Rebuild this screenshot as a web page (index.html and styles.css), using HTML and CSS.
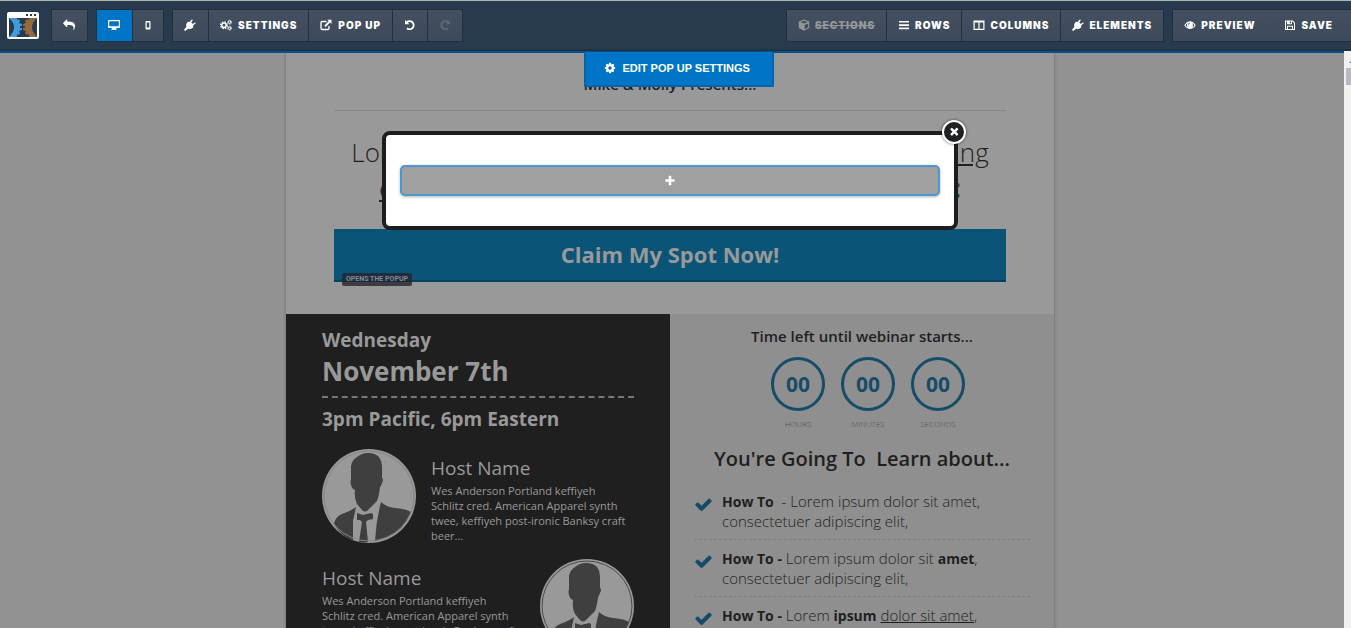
FILE: index.html
```html
<!DOCTYPE html>
<html lang="en">
<head>
  <meta charset="UTF-8">
  <meta name="viewport" content="width=device-width, initial-scale=1.0">
  <title>Page Editor</title>
  <link rel="stylesheet" href="styles.css">
</head>
<body>

  <!-- icon sprite -->
  <svg class="sprite" aria-hidden="true">
    <symbol id="reply" viewBox="0 0 1792 1792"><path d="M1792 640q0 26-19 45l-512 512q-19 19-45 19t-45-19-19-45v-256h-224q-98 0-175.500 6t-154 21.500-133 42.500-105.500 69.500-80 101-48.500 138.500-17.500 181q0 55 5 123 0 6 2.500 23.500t2.500 26.500q0 15-8.500 25t-23.500 10q-16 0-28-17-7-9-13-22t-13.500-30-10.500-24q-127-285-127-451 0-199 53-333 162-403 875-403h224v-256q0-26 19-45t45-19 45 19l512 512q19 19 19 45z" transform="matrix(-1 0 0 1 1792 0)"/></symbol>
    <symbol id="desktop" viewBox="0 0 12 12"><path fill-rule="evenodd" d="M1 1h10q1 0 1 1v6q0 1-1 1H8l.5 1.500v.5h-5v-.5L4 9H1Q0 9 0 8V2q0-1 1-1zm.2 1.200v5h9.600v-5z"/></symbol>
    <symbol id="mobile" viewBox="0 0 12 12"><path fill-rule="evenodd" d="M4.500 2h3q1 0 1 1v6.500q0 1-1 1h-3q-1 0-1-1V3q0-1 1-1zm.2 1.500v5h2.600v-5z"/></symbol>
    <symbol id="plug" viewBox="0 0 12 12"><path d="M7.500.7 5.800 2.800 3.600 3 2.200 5.200 2.300 8 .3 10.200v1.500l1.800-.2L4 9.800l2.800.1 2.300-1.500.2-2.200 2.200-1.700q.6-1.200-.7-1L8.900 4.900 7.200 3.200 8.700 1.400Q8.700.2 7.500.7z"/></symbol>
    <symbol id="cog" viewBox="0 0 1792 1792"><path d="M1152 896q0-106-75-181t-181-75-181 75-75 181 75 181 181 75 181-75 75-181zm512-109v222q0 12-8 23t-20 13l-185 28q-19 54-39 91 35 50 107 138 10 12 10 25t-9 23q-27 37-99 108t-94 71q-12 0-26-9l-138-108q-44 23-91 38-16 136-29 186-7 28-36 28h-222q-14 0-24.500-8.500t-11.500-21.500l-28-184q-49-16-90-37l-141 107q-10 9-25 9-14 0-25-11-126-114-165-168-7-10-7-23 0-12 8-23 15-21 51-66.500t54-70.500q-27-50-41-99l-183-27q-13-2-21-12.500t-8-23.500v-222q0-12 8-23t19-13l186-28q14-46 39-92-40-57-107-138-10-12-10-24 0-10 9-23 26-36 98.500-107.500t94.500-71.500q13 0 26 10l138 107q44-23 91-38 16-136 29-186 7-28 36-28h222q14 0 24.500 8.500t11.500 21.500l28 184q49 16 90 37l142-107q9-9 24-9 13 0 25 10 129 119 165 170 7 8 7 22 0 12-8 23-15 21-51 66.500t-54 70.500q26 50 41 98l183 28q13 2 21 12.500t8 23.500z"/></symbol>
    <symbol id="cogs" viewBox="0 0 12 12">
      <g fill="none" stroke="currentColor">
        <circle cx="4" cy="6.300" r="2.200" stroke-width="1.500"/>
        <circle cx="4" cy="6.300" r="3.400" stroke-width="1.200" stroke-dasharray="1.500 1.170"/>
        <circle cx="9.700" cy="3.200" r="1.200" stroke-width="1"/>
        <circle cx="9.700" cy="3.200" r="2" stroke-width=".8" stroke-dasharray="1.200 .9"/>
        <circle cx="9.700" cy="9.200" r="1.200" stroke-width="1"/>
        <circle cx="9.700" cy="9.200" r="2" stroke-width=".8" stroke-dasharray="1.200 .9"/>
      </g>
    </symbol>
    <symbol id="external" viewBox="0 0 12 12"><path d="M6.500 2.500H2.300Q1 2.500 1 3.800v5.400q0 1.300 1.300 1.300h5.400Q9 10.500 9 9.200V7" fill="none" stroke="currentColor" stroke-width="1.300"/><path d="M7.300.8h4.200V5L10 3.600 5.700 8 4.300 6.600l4.400-4.300z"/></symbol>
    <symbol id="undo" viewBox="0 0 12 12"><path d="M2.800 3.300A4 4 0 1 1 3 9.200" fill="none" stroke="currentColor" stroke-width="1.900"/><path d="M1 1v4.300h4.300z"/></symbol>
    <symbol id="cube" viewBox="0 0 12 12"><path fill-rule="evenodd" d="M6 .6 11.200 2.500v6.600L6 11.800.8 9.100V2.500zM6.500 6v4.300l3.700-2V4.500zM6 1.700 2.300 3 6 4.500 9.700 3z"/></symbol>
    <symbol id="bars" viewBox="0 0 12 12"><path d="M1 2h10v1.600H1zM1 5.300h10v1.600H1zM1 8.600h10v1.600H1z"/></symbol>
    <symbol id="columns" viewBox="0 0 12 12"><path fill-rule="evenodd" d="M.5 1.500h11v9.500H.5zM1.700 3.500V9.800h3.700V3.500zM6.600 3.500V9.800h3.700V3.500z"/></symbol>
    <symbol id="eye" viewBox="0 0 12 12"><path fill-rule="evenodd" d="M.3 6.200Q2.800 2.300 6 2.300t5.700 3.900Q9.200 10 6 10T.3 6.200zm1.300 0q.8 1.300 1.900 2Q2.400 6 3.700 4.100q-1.200.7-2.100 2.100zm8.800 0Q9.500 4.800 8.300 4.100 9.600 6 8.500 8.200q1.100-.7 1.900-2zM6 3.600Q4.300 3.800 4.200 5.700h.7Q5 4.400 6 4.300z"/></symbol>
    <symbol id="save" viewBox="0 0 12 12"><path fill-rule="evenodd" d="M1 1.500h7.800L11 3.700V11H1zM2 2.500V10h1V6.800h6V10h1V4.200L8.400 2.500H8v2.700H3V2.500zM5.700 2.500v1.700H7V2.500zM4 7.800V10h4V7.800z"/></symbol>
    <symbol id="plus" viewBox="0 0 1792 1792"><path d="M1600 736v192q0 40-28 68t-68 28h-416v416q0 40-28 68t-68 28h-192q-40 0-68-28t-28-68v-416h-416q-40 0-68-28t-28-68v-192q0-40 28-68t68-28h416v-416q0-40 28-68t68-28h192q40 0 68 28t28 68v416h416q40 0 68 28t28 68z"/></symbol>
    <symbol id="check" viewBox="0 0 1792 1792"><path d="M1671 566q0 40-28 68l-724 724-136 136q-28 28-68 28t-68-28l-136-136-362-362q-28-28-28-68t28-68l136-136q28-28 68-28t68 28l294 295 656-657q28-28 68-28t68 28l136 136q28 28 28 68z"/></symbol>
    <symbol id="person" viewBox="0 0 94 94">
      <circle cx="47" cy="47" r="47" fill="#999"/>
      <path fill="#3f3f3f" d="M29 17q1-6 6-9 5-4 11-4 7 0 11 4 3 4 3 9v12q2 1 0 5-1 3-2 4-1 9-3 14l-9 9q-3 3-6 0l-5-6q-3-6-2-14-3-1-4-5-1-4 0-5z"/>
      <path fill="#3f3f3f" d="M34 58 31 72v20Q18 86 12 75q1-7 8-10 9-3 14-7zM59 53q5 5 14 6 12 1 16 4-8 23-36 29 1-20 6-39zM35 64l6 2 8-2 2 1v5l-5 1-2 2 2 20q-5 1-9 0l3-20-2-2-3 0z"/>
    </symbol>
  </svg>

  <header class="toolbar">
    <svg class="logo" viewBox="0 0 32 27" role="img" aria-label="Editor logo">
      <rect width="32" height="27" rx="2" fill="#fff"/>
      <path fill="#283a4e" d="M2 6h28v19H2zM19 2h2v2h-2zM23 2h2v2h-2zM27 2h2v2h-2z"/>
      <path fill="#3f9bdc" d="M2 6h8v2l2-1 1 2-1 2 3 1v2h-2v2h2v2l-3 1 1 2-1 2-2-1v3H2q10-10 0-19z"/>
      <path fill="#946a3c" d="M30 6h-8v2l-2-1-2 2 1 2-3 1v2h2v2h-2v2l3 1-1 2 2 2 2-1v3h8q-10-10 0-19z"/>
    </svg>

    <div class="btn-group">
      <button class="btn btn--icon" aria-label="Back"><svg class="icon"><use href="#reply"/></svg></button>
    </div>
    <div class="btn-group">
      <button class="btn btn--icon btn--active" aria-label="Desktop"><svg class="icon"><use href="#desktop"/></svg></button>
      <button class="btn btn--narrow" aria-label="Mobile"><svg class="icon"><use href="#mobile"/></svg></button>
    </div>
    <div class="btn-group">
      <button class="btn btn--icon" aria-label="Integrations"><svg class="icon"><use href="#plug"/></svg></button>
      <button class="btn"><svg class="icon"><use href="#cogs"/></svg>SETTINGS</button>
      <button class="btn"><svg class="icon"><use href="#external"/></svg>POP UP</button>
      <button class="btn" aria-label="Undo"><svg class="icon"><use href="#undo"/></svg></button>
      <button class="btn" aria-label="Redo" disabled><svg class="icon icon--flip"><use href="#undo"/></svg></button>
    </div>

    <div class="btn-group btn-group--right">
      <button class="btn btn--off" disabled><svg class="icon"><use href="#cube"/></svg><s>SECTIONS</s></button>
      <button class="btn"><svg class="icon"><use href="#bars"/></svg>ROWS</button>
      <button class="btn"><svg class="icon"><use href="#columns"/></svg>COLUMNS</button>
      <button class="btn"><svg class="icon"><use href="#plug"/></svg>ELEMENTS</button>
    </div>
    <div class="btn-group btn-group--last">
      <button class="btn"><svg class="icon"><use href="#eye"/></svg>PREVIEW</button>
      <button class="btn"><svg class="icon"><use href="#save"/></svg>SAVE</button>
    </div>
  </header>

  <div class="workspace">
    <main class="canvas">
      <div class="sheet">
        <section class="hero">
          <p class="hero__presents">Mike &amp; Molly Presents...</p>
          <h1 class="hero__title">Lorem Ipsum Dolor Amet <u>Set Diam Nonumy Adipiscing</u><br><u>euismod tincidunt laoreet dolore</u> magni <b>aliquam:</b></h1>
          <button class="hero__cta">Claim My Spot Now!</button>
          <span class="hero__tag">OPENS THE POPUP</span>
        </section>

        <div class="columns">
          <section class="event">
            <p class="event__day">Wednesday</p>
            <h2 class="event__date">November 7th</h2>
            <p class="event__time">3pm Pacific, 6pm Eastern</p>

            <div class="host">
              <svg class="host__photo" viewBox="0 0 94 94"><use href="#person"/><circle class="host__ring" cx="47" cy="47" r="45"/></svg>
              <div class="host__bio">
                <h3 class="host__name">Host Name</h3>
                <p>Wes Anderson Portland keffiyeh Schlitz cred. American Apparel synth twee, keffiyeh post-ironic Banksy craft beer...</p>
              </div>
            </div>
            <div class="host host--reverse">
              <svg class="host__photo" viewBox="0 0 94 94"><use href="#person"/><circle class="host__ring host__ring--dark" cx="47" cy="47" r="45"/></svg>
              <div class="host__bio">
                <h3 class="host__name">Host Name</h3>
                <p>Wes Anderson Portland keffiyeh Schlitz cred. American Apparel synth twee, keffiyeh post-ironic Banksy craft beer...</p>
              </div>
            </div>
          </section>

          <section class="learn">
            <p class="learn__label">Time left until webinar starts...</p>
            <div class="countdown">
              <div class="countdown__item"><span class="countdown__value">00</span>HOURS</div>
              <div class="countdown__item"><span class="countdown__value">00</span>MINUTES</div>
              <div class="countdown__item"><span class="countdown__value">00</span>SECONDS</div>
            </div>
            <h2 class="learn__title">You're Going To &nbsp;Learn about...</h2>
            <ul class="checklist">
              <li><svg class="checklist__icon"><use href="#check"/></svg><span><b>How To</b> &nbsp;- Lorem ipsum dolor sit amet, consectetuer adipiscing elit,</span></li>
              <li><svg class="checklist__icon"><use href="#check"/></svg><span><b>How To -</b> Lorem ipsum dolor sit <b>amet</b>, consectetuer adipiscing elit,</span></li>
              <li><svg class="checklist__icon"><use href="#check"/></svg><span><b>How To -</b> Lorem <b>ipsum</b> <u>dolor sit amet</u>, consectetuer adipiscing elit,</span></li>
            </ul>
          </section>
        </div>
      </div>

      <div class="popup" role="dialog" aria-label="Pop up">
        <button class="popup__add" aria-label="Add row"><svg class="icon"><use href="#plus"/></svg></button>
        <button class="popup__close" aria-label="Close"><svg class="icon icon--x"><use href="#plus"/></svg></button>
      </div>
    </main>
    <div class="scrollbar">
      <svg class="scrollbar__arrow" viewBox="0 0 8 4"><path d="M0 4 4 0l4 4z"/></svg>
      <div class="scrollbar__thumb"></div>
    </div>

    <button class="edit-popup"><svg class="icon"><use href="#cog"/></svg>EDIT POP UP SETTINGS</button>
  </div>

</body>
</html>
```

FILE: styles.css
```css
:root {
  --clr-bar: #283a4e;
  --clr-line: #25303c;
  --clr-blue: #0074c7;
  --clr-ink: #1f1f1f;
  --clr-teal: #174c69;
  --clr-paper: #999;

  font-family: "Open Sans", sans-serif;
}

* {
  box-sizing: border-box;
}

body {
  height: 100vh;
  margin: 0;
  display: flex;
  flex-direction: column;
  overflow: hidden;
}

h1, h2, h3, p, ul {
  margin: 0;
  padding: 0;
}

b {
  font-weight: 700;
}

button {
  font: inherit;
  color: inherit;
  cursor: pointer;
}

.sprite {
  display: none;
}

.icon {
  width: 12px;
  height: 12px;
  flex: none;
  fill: currentColor;
}

.icon--flip {
  transform: scaleX(-1);
}

.icon--x {
  transform: rotate(45deg);
}

/* toolbar */

.toolbar {
  flex: none;
  height: 51px;
  display: flex;
  align-items: center;
  gap: 8px;
  padding-left: 7px;
  overflow: hidden;
  background: var(--clr-bar);
  border-top: 1px solid #b0b4b4;
  border-bottom: 2px solid #22303f;
}

.logo {
  width: 32px;
  height: 27px;
  margin-right: 4px;
  flex: none;
}

.btn-group {
  display: flex;
  flex: none;
  border: 1px solid var(--clr-line);
}

.btn-group--right {
  margin-left: auto;
}

.btn {
  height: 31px;
  display: flex;
  align-items: center;
  gap: 6px;
  padding: 0 11px;
  border: 0;
  background: linear-gradient(#445060, #3d4a5b);
  color: #fff;
  font-family: Inter, sans-serif;
  font-size: 10px;
  font-weight: 900;
  letter-spacing: 1px;
}

.btn + .btn {
  border-left: 1px solid var(--clr-line);
}

.btn--icon {
  padding: 0 12px 0 11px;
}

.btn--narrow {
  padding: 0 9px;
}

.btn--active {
  background: var(--clr-blue);
}

.btn:disabled {
  color: #616971;
}

.btn--off:disabled {
  color: #949797;
}

.btn-group--right .btn,
.btn-group--last .btn {
  gap: 5px;
}

.btn-group--last {
  border-right: 0;
}

.btn-group--last .btn {
  border-left: 0;
  padding-right: 18px;
}

/* page being edited */

.workspace {
  flex: 1;
  min-height: 0;
  display: flex;
  position: relative;
}

.canvas {
  flex: 1;
  position: relative;
  overflow: hidden;
  padding-right: 4px;
  border-top: 2px solid #00528f;
  background: #929292;
  color: var(--clr-ink);
}

.sheet {
  width: 768px;
  margin: 0 auto;
  background: var(--clr-paper);
  box-shadow: 0 0 3px rgba(0, 0, 0, 0.3);
}

.hero {
  position: relative;
  padding: 19px 48px 32px;
  text-align: center;
}

.hero__presents {
  padding-bottom: 14px;
  border-bottom: 1px solid #858585;
  font-size: 15px;
  font-weight: 600;
  line-height: 24px;
}

.hero__title {
  padding: 23px 0;
  font-size: 26px;
  font-weight: 300;
  line-height: 36px;
  white-space: nowrap;
}

.hero__title b {
  color: var(--clr-teal);
}

.hero__cta {
  display: block;
  width: 100%;
  height: 53px;
  padding: 0 0 2px;
  border: 0;
  border-bottom: 2px solid #07415e;
  background: #095477;
  color: var(--clr-paper);
  font-size: 22px;
  font-weight: 700;
}

.hero__tag {
  position: absolute;
  left: 56px;
  bottom: 28px;
  padding: 0 4px;
  border-radius: 2px;
  background: rgba(40, 35, 45, 0.8);
  color: #7d8c96;
  font-family: Roboto, sans-serif;
  font-size: 7px;
  font-weight: 700;
  line-height: 13px;
}

.columns {
  display: grid;
  grid-template-columns: 1fr 1fr;
}

.event {
  padding: 13px 36px;
  background: #1f1f1f;
  color: var(--clr-paper);
}

.event__day,
.event__time {
  font-size: 19px;
  font-weight: 700;
  line-height: 27px;
}

.event__date {
  padding-bottom: 8px;
  border-bottom: 2px dashed #777;
  font-size: 26px;
  font-weight: 700;
  line-height: 34px;
}

.event__time {
  padding-top: 8px;
}

.host {
  display: flex;
  gap: 15px;
  margin-top: 16px;
  font-size: 11px;
  line-height: 15px;
}

.host--reverse {
  flex-direction: row-reverse;
}

.host__photo {
  width: 94px;
  height: 94px;
  flex: none;
}

.host__ring {
  fill: none;
  stroke: #858585;
  stroke-width: 1px;
}

.host__ring--dark {
  stroke: #4a4a4a;
}

.host__bio {
  flex: 1;
  padding: 6px 6px 0 0;
}

.host__name {
  padding-bottom: 2px;
  font-size: 19px;
  font-weight: 400;
  line-height: 26px;
}

.learn {
  padding: 12px 24px;
  background: #8f8f8f;
}

.learn__label {
  font-size: 15px;
  font-weight: 600;
  line-height: 20px;
  text-align: center;
}

.countdown {
  display: flex;
  justify-content: center;
  gap: 16px;
  padding: 11px 0 0 12px;
}

.countdown__item {
  width: 54px;
  display: flex;
  flex-direction: column;
  align-items: center;
  gap: 7px;
  color: #4c5458;
  font-size: 8px;
  font-weight: 300;
  line-height: 12px;
}

.countdown__value {
  width: 54px;
  height: 54px;
  border: 3px solid var(--clr-teal);
  border-radius: 50%;
  color: var(--clr-teal);
  font-size: 21px;
  font-weight: 700;
  line-height: 48px;
  text-align: center;
}

.learn__title {
  padding-top: 15px;
  font-size: 20px;
  font-weight: 600;
  line-height: 28px;
  text-align: center;
}

.checklist {
  padding-top: 10px;
  list-style: none;
  font-size: 15px;
  font-weight: 300;
  line-height: 20px;
}

.checklist li {
  display: flex;
  align-items: flex-start;
  gap: 9px;
  padding: 8px 0;
  border-bottom: 1px dashed #7c7c7c;
}

.checklist b {
  font-size: 14px;
  line-height: 1;
}

.checklist__icon {
  width: 19px;
  height: 19px;
  margin-top: 4px;
  flex: none;
  fill: var(--clr-teal);
}

/* popup */

.popup {
  position: absolute;
  top: 78px;
  left: 0;
  right: 4px;
  width: 576px;
  margin: 0 auto;
  padding: 30px 14px;
  border: 4px solid #1d1d1d;
  border-radius: 8px;
  background: #fff;
}

.popup__add {
  width: 100%;
  height: 31px;
  display: flex;
  align-items: center;
  justify-content: center;
  border: 2px solid #4c97d0;
  border-radius: 5px;
  background: #a0a0a0;
  color: #fff;
  box-shadow: 0 1px 3px rgba(0, 0, 0, 0.3);
}

.popup__close {
  position: absolute;
  top: -15px;
  right: -12px;
  width: 24px;
  height: 24px;
  display: flex;
  align-items: center;
  justify-content: center;
  padding: 0;
  border: 2px solid #fff;
  border-radius: 50%;
  background: #1f2124;
  color: #fff;
  box-shadow: 0 0 3px rgba(0, 0, 0, 0.6);
}

.edit-popup {
  position: absolute;
  top: 1px;
  left: 50%;
  margin-left: -92px;
  height: 35px;
  display: flex;
  align-items: center;
  gap: 7px;
  padding: 0 22px 2px 18px;
  border: 2px solid #0063ab;
  border-top: 0;
  border-radius: 0 0 2px 2px;
  background: var(--clr-blue);
  color: #fff;
  font-family: "Liberation Sans", sans-serif;
  font-size: 11px;
  font-weight: 700;
}

.scrollbar {
  width: 7px;
  display: flex;
  flex-direction: column;
  gap: 5px;
  padding: 8px 0 0 2px;
  overflow: hidden;
  background: #f1f1f1;
}

.scrollbar__arrow {
  width: 8px;
  height: 4px;
  margin-left: 3px;
  flex: none;
  fill: #777;
}

.scrollbar__thumb {
  height: 17px;
  background: #b9b8c4;
}
```
